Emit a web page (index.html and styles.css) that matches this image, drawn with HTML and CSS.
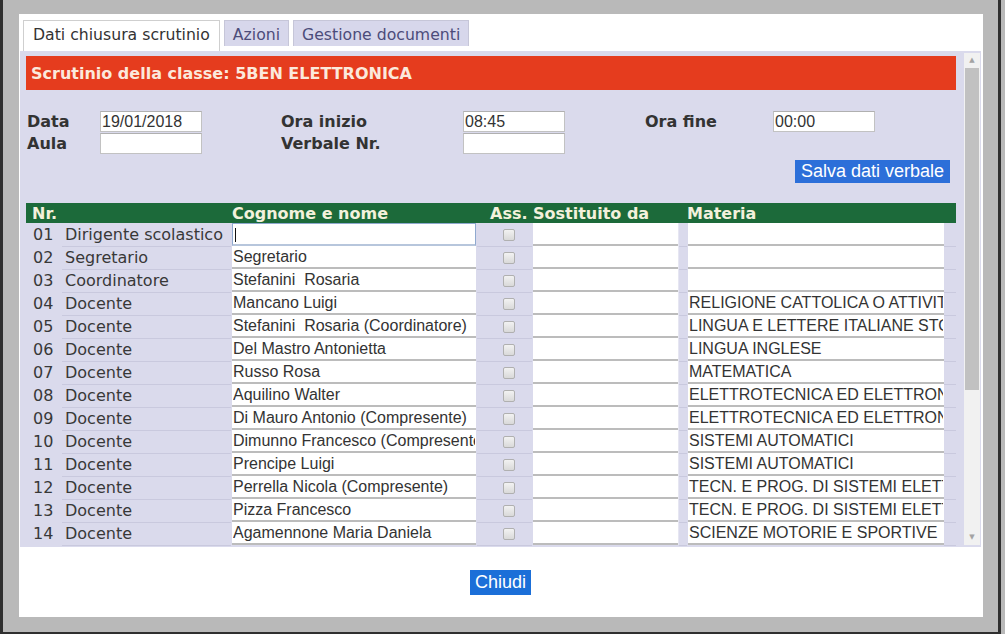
FILE: index.html
```html
<!DOCTYPE html>
<html lang="it">
<head>
<meta charset="utf-8">
<title>Scrutinio</title>
<link rel="stylesheet" href="styles.css">
</head>
<body>
<div class="frame">
  <div class="dialog">
    <ul class="tabs">
      <li class="tab active">Dati chiusura scrutinio</li>
      <li class="tab">Azioni</li>
      <li class="tab">Gestione documenti</li>
    </ul>
    <div class="panel">
      <div class="panel-content">
        <div class="title-bar">Scrutinio della classe: 5BEN ELETTRONICA</div>
        <div class="form-grid">
          <span class="lbl">Data</span><input class="fld" type="text" value="19/01/2018">
          <span></span>
          <span class="lbl">Ora inizio</span><input class="fld" type="text" value="08:45">
          <span></span>
          <span class="lbl">Ora fine</span><input class="fld" type="text" value="00:00">
          <span class="lbl">Aula</span><input class="fld" type="text" value="">
          <span></span>
          <span class="lbl">Verbale Nr.</span><input class="fld" type="text" value="">
          <span></span><span></span><span></span>
        </div>
        <div class="save-row"><button class="btn-save" type="button">Salva dati verbale</button></div>
        <div class="thead">
          <span class="th th-nr">Nr.</span>
          <span class="th th-name">Cognome e nome</span>
          <span class="th th-ass">Ass.</span>
          <span class="th th-sost">Sostituito da</span>
          <span class="th th-mat">Materia</span>
        </div>
        <div class="rows">
          <div class="row"><span class="c-nr">01</span><span class="c-role">Dirigente scolastico</span><span class="c-name focus-wrap"><input class="cell-in focused" type="text" value=""><span class="caret"></span></span><span class="c-ass"><input class="chk" type="checkbox"></span><span class="c-sost"><input class="cell-in" type="text" value=""></span><span class="c-gap"></span><span class="c-mat"><input class="cell-in" type="text" value=""></span><span class="c-end"></span></div>
          <div class="row"><span class="c-nr">02</span><span class="c-role">Segretario</span><span class="c-name"><input class="cell-in" type="text" value="Segretario"></span><span class="c-ass"><input class="chk" type="checkbox"></span><span class="c-sost"><input class="cell-in" type="text" value=""></span><span class="c-gap"></span><span class="c-mat"><input class="cell-in" type="text" value=""></span><span class="c-end"></span></div>
          <div class="row"><span class="c-nr">03</span><span class="c-role">Coordinatore</span><span class="c-name"><input class="cell-in" type="text" value="Stefanini  Rosaria"></span><span class="c-ass"><input class="chk" type="checkbox"></span><span class="c-sost"><input class="cell-in" type="text" value=""></span><span class="c-gap"></span><span class="c-mat"><input class="cell-in" type="text" value=""></span><span class="c-end"></span></div>
          <div class="row"><span class="c-nr">04</span><span class="c-role">Docente</span><span class="c-name"><input class="cell-in" type="text" value="Mancano Luigi"></span><span class="c-ass"><input class="chk" type="checkbox"></span><span class="c-sost"><input class="cell-in" type="text" value=""></span><span class="c-gap"></span><span class="c-mat"><input class="cell-in" type="text" value="RELIGIONE CATTOLICA O ATTIVITA' ALTERNATIVE"></span><span class="c-end"></span></div>
          <div class="row"><span class="c-nr">05</span><span class="c-role">Docente</span><span class="c-name"><input class="cell-in" type="text" value="Stefanini  Rosaria (Coordinatore)"></span><span class="c-ass"><input class="chk" type="checkbox"></span><span class="c-sost"><input class="cell-in" type="text" value=""></span><span class="c-gap"></span><span class="c-mat"><input class="cell-in" type="text" value="LINGUA E LETTERE ITALIANE STORIA"></span><span class="c-end"></span></div>
          <div class="row"><span class="c-nr">06</span><span class="c-role">Docente</span><span class="c-name"><input class="cell-in" type="text" value="Del Mastro Antonietta"></span><span class="c-ass"><input class="chk" type="checkbox"></span><span class="c-sost"><input class="cell-in" type="text" value=""></span><span class="c-gap"></span><span class="c-mat"><input class="cell-in" type="text" value="LINGUA INGLESE"></span><span class="c-end"></span></div>
          <div class="row"><span class="c-nr">07</span><span class="c-role">Docente</span><span class="c-name"><input class="cell-in" type="text" value="Russo Rosa"></span><span class="c-ass"><input class="chk" type="checkbox"></span><span class="c-sost"><input class="cell-in" type="text" value=""></span><span class="c-gap"></span><span class="c-mat"><input class="cell-in" type="text" value="MATEMATICA"></span><span class="c-end"></span></div>
          <div class="row"><span class="c-nr">08</span><span class="c-role">Docente</span><span class="c-name"><input class="cell-in" type="text" value="Aquilino Walter"></span><span class="c-ass"><input class="chk" type="checkbox"></span><span class="c-sost"><input class="cell-in" type="text" value=""></span><span class="c-gap"></span><span class="c-mat"><input class="cell-in" type="text" value="ELETTROTECNICA ED ELETTRONICA"></span><span class="c-end"></span></div>
          <div class="row"><span class="c-nr">09</span><span class="c-role">Docente</span><span class="c-name"><input class="cell-in" type="text" value="Di Mauro Antonio (Compresente)"></span><span class="c-ass"><input class="chk" type="checkbox"></span><span class="c-sost"><input class="cell-in" type="text" value=""></span><span class="c-gap"></span><span class="c-mat"><input class="cell-in" type="text" value="ELETTROTECNICA ED ELETTRONICA"></span><span class="c-end"></span></div>
          <div class="row"><span class="c-nr">10</span><span class="c-role">Docente</span><span class="c-name"><input class="cell-in" type="text" value="Dimunno Francesco (Compresente)"></span><span class="c-ass"><input class="chk" type="checkbox"></span><span class="c-sost"><input class="cell-in" type="text" value=""></span><span class="c-gap"></span><span class="c-mat"><input class="cell-in" type="text" value="SISTEMI AUTOMATICI"></span><span class="c-end"></span></div>
          <div class="row"><span class="c-nr">11</span><span class="c-role">Docente</span><span class="c-name"><input class="cell-in" type="text" value="Prencipe Luigi"></span><span class="c-ass"><input class="chk" type="checkbox"></span><span class="c-sost"><input class="cell-in" type="text" value=""></span><span class="c-gap"></span><span class="c-mat"><input class="cell-in" type="text" value="SISTEMI AUTOMATICI"></span><span class="c-end"></span></div>
          <div class="row"><span class="c-nr">12</span><span class="c-role">Docente</span><span class="c-name"><input class="cell-in" type="text" value="Perrella Nicola (Compresente)"></span><span class="c-ass"><input class="chk" type="checkbox"></span><span class="c-sost"><input class="cell-in" type="text" value=""></span><span class="c-gap"></span><span class="c-mat"><input class="cell-in" type="text" value="TECN. E PROG. DI SISTEMI ELETTRICI ED ELETTRONICI"></span><span class="c-end"></span></div>
          <div class="row"><span class="c-nr">13</span><span class="c-role">Docente</span><span class="c-name"><input class="cell-in" type="text" value="Pizza Francesco"></span><span class="c-ass"><input class="chk" type="checkbox"></span><span class="c-sost"><input class="cell-in" type="text" value=""></span><span class="c-gap"></span><span class="c-mat"><input class="cell-in" type="text" value="TECN. E PROG. DI SISTEMI ELETTRICI ED ELETTRONICI"></span><span class="c-end"></span></div>
          <div class="row"><span class="c-nr">14</span><span class="c-role">Docente</span><span class="c-name"><input class="cell-in" type="text" value="Agamennone Maria Daniela"></span><span class="c-ass"><input class="chk" type="checkbox"></span><span class="c-sost"><input class="cell-in" type="text" value=""></span><span class="c-gap"></span><span class="c-mat"><input class="cell-in" type="text" value="SCIENZE MOTORIE E SPORTIVE"></span><span class="c-end"></span></div>
        </div>
      </div>
      <div class="scrollbar">
        <span class="sb-arrow">&#9650;</span>
        <span class="sb-thumb"></span>
        <span class="sb-track"></span>
        <span class="sb-arrow">&#9660;</span>
      </div>
    </div>
    <div class="footer">
      <button class="btn-close" type="button">Chiudi</button>
    </div>
  </div>
</div>
</body>
</html>
```

FILE: styles.css
```css
* { box-sizing: border-box; }

html, body {
  margin: 0;
  padding: 0;
  width: 1005px;
  height: 634px;
  overflow: hidden;
  background: #b9b9b9;
}

.frame {
  width: 1001px;
  height: 634px;
  border-left: 3px solid #2f2f2f;
  border-right: 3px solid #2f2f2f;
  border-bottom: 2px solid #2f2f2f;
  padding: 14px 0 0 16px;
}

.dialog {
  width: 964px;
  height: 603px;
  background: #ffffff;
  padding: 6px 2px 0 1px;
  display: flex;
  flex-direction: column;
}

/* Tabs */
.tabs {
  list-style: none;
  margin: 0 0 0 3px;
  padding: 0;
  display: flex;
  align-items: flex-start;
  gap: 4px;
  height: 31px;
  font-family: "DejaVu Sans", Verdana, sans-serif;
  font-size: 15.7px;
}

.tab {
  height: 26px;
  padding: 0 8px;
  line-height: 27px;
  background: #d7d7eb;
  border: 1px solid #c6c6d8;
  border-bottom: none;
  color: #4c4c7a;
}

.tab.active {
  height: 31px;
  background: #ffffff;
  border-color: #cfcfcf;
  color: #333333;
  padding: 0 9px;
}

/* Panel */
.panel {
  width: 961px;
  height: 496px;
  background: #dadaec;
  display: flex;
  overflow: hidden;
}

.panel-content {
  flex: 1;
  padding: 5px 8px 0 6px;
  overflow: hidden;
}

.title-bar {
  height: 34px;
  background: #e53c1e;
  color: #fbe9dc;
  font-family: "DejaVu Sans", Verdana, sans-serif;
  font-weight: bold;
  font-size: 16px;
  line-height: 35px;
  padding-left: 5px;
}

.form-grid {
  margin-top: 21px;
  margin-left: 1px;
  display: grid;
  grid-template-columns: 73px 102px 79px 182px 102px 80px 128px 102px;
  grid-template-rows: 21px 21px;
  row-gap: 1px;
  align-items: center;
}

.lbl {
  font-family: "DejaVu Sans", Verdana, sans-serif;
  font-weight: bold;
  font-size: 16px;
  color: #333333;
  line-height: 21px;
  white-space: nowrap;
}

.fld {
  width: 102px;
  height: 21px;
  margin: 0;
  padding: 0 1px;
  border: 1px solid #c2c2c2;
  border-top-color: #b0b0b0;
  background: #ffffff;
  font-family: "Liberation Sans", Arial, sans-serif;
  font-size: 16px;
  color: #333333;
  outline: none;
}

.save-row {
  display: flex;
  justify-content: flex-end;
  margin-top: 6px;
  padding-right: 6px;
}

.btn-save {
  height: 23px;
  margin: 0;
  padding: 0 6px;
  border: none;
  background: #2c6fd9;
  color: #ffffff;
  font-family: "Liberation Sans", Arial, sans-serif;
  font-size: 18px;
  line-height: 23px;
}

/* Table */
.thead, .row {
  display: grid;
  grid-template-columns: 36px 169px 246px 55px 146px 9px 257px 12px;
}

.thead {
  margin-top: 20px;
  height: 20px;
  background: #1c6a3a;
  color: #f3f1dc;
  font-family: "DejaVu Sans", Verdana, sans-serif;
  font-weight: bold;
  font-size: 16px;
  line-height: 21px;
}

.th-nr { padding-left: 6px; }
.th-name { grid-column: 3; padding-left: 1px; }
.th-ass { grid-column: 4; padding-left: 13px; white-space: nowrap; }
.th-sost { grid-column: 5 / span 2; padding-left: 1px; white-space: nowrap; }
.th-mat { grid-column: 7; }

.row {
  height: 23px;
  font-family: "DejaVu Sans", Verdana, sans-serif;
  font-size: 16px;
  color: #383838;
}

.c-nr {
  padding-left: 7px;
  line-height: 23px;
}

.c-role {
  padding-left: 3px;
  line-height: 23px;
  border-bottom: 1px solid #c9c9de;
  white-space: nowrap;
}

.c-name, .c-sost, .c-mat {
  padding-left: 1px;
}

.c-name { padding-right: 1px; }

.c-ass, .c-gap, .c-end {
  border-bottom: 1px solid #c9c9de;
}

.c-gap { border-left: 1px solid #e6e6f2; }

.c-ass {
  display: flex;
  align-items: center;
  padding-left: 26px;
}

.cell-in {
  display: block;
  width: 100%;
  height: 23px;
  margin: 0;
  padding: 0 1px;
  border: none;
  border-bottom: 2px solid #bcbcbc;
  background: #ffffff;
  font-family: "Liberation Sans", Arial, sans-serif;
  font-size: 16px;
  color: #333333;
  outline: none;
}

.focus-wrap { position: relative; }

.cell-in.focused {
  border: 1px solid #8fa9cf;
  border-bottom: 2px solid #b7c6dc;
}

.caret {
  position: absolute;
  left: 4px;
  top: 5px;
  width: 1px;
  height: 14px;
  background: #111111;
}

.chk {
  -webkit-appearance: none;
  appearance: none;
  width: 12px;
  height: 12px;
  margin: 0;
  border: 1px solid #b0b0b0;
  border-radius: 2px;
  background: linear-gradient(#f2f2f2, #d9d9d9);
}

/* Scrollbar */
.scrollbar {
  width: 16px;
  margin: 2px 1px 2px 0;
  display: flex;
  flex-direction: column;
  background: #f1f1f1;
}

.sb-arrow {
  height: 15px;
  font-size: 7px;
  line-height: 15px;
  text-align: center;
  color: #a3a3a3;
  font-family: "DejaVu Sans", sans-serif;
}

.sb-thumb {
  height: 322px;
  margin: 0 1px;
  background: #c1c1c1;
}

.sb-track { flex: 1; }

/* Footer */
.footer {
  display: flex;
  justify-content: center;
  padding-top: 23px;
}

.btn-close {
  width: 61px;
  height: 25px;
  margin: 0;
  padding: 0;
  border: none;
  background: #1b6fd8;
  color: #ffffff;
  font-family: "Liberation Sans", Arial, sans-serif;
  font-size: 18px;
  line-height: 25px;
}
```
